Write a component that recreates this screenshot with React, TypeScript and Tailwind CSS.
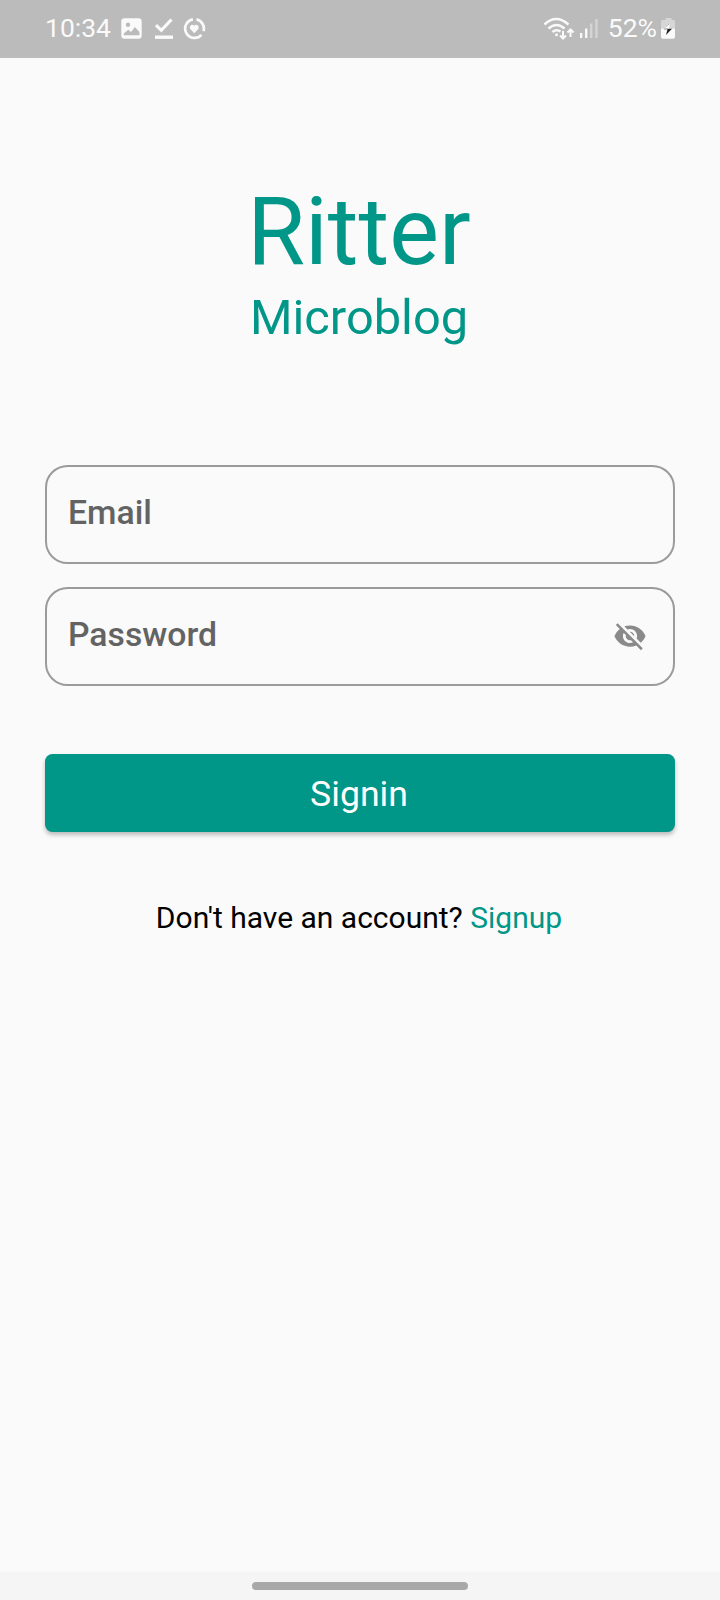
import React from "react";
import { MdVisibilityOff } from "react-icons/md";

function ImageIcon() {
  return (
    <svg className="ml-[10px] h-[22px] w-[22px]" viewBox="0 0 22 22" fill="#fafafa">
      <path fillRule="evenodd" d="M3.500 .2H17.500A3.200 3.200 0 0 1 20.700 3.400V17.600A3.200 3.200 0 0 1 17.500 20.800H3.500A3.200 3.200 0 0 1 .3 17.600V3.400A3.200 3.200 0 0 1 3.500 .2ZM2.800 17.300H18.400V14L14 9L10 14L7.200 11.800L2.800 15.500ZM7 4.600A2.200 2.200 0 1 0 7 9A2.200 2.200 0 1 0 7 4.600Z" />
    </svg>
  );
}

function DoneIcon() {
  return (
    <svg className="ml-[11px] h-[22px] w-[20px]" viewBox="0 0 20 22" fill="none" stroke="#fafafa">
      <path d="M2 7.200L7.300 12.300L17.500 1.500" strokeWidth="3.200" />
      <path d="M1 19.200H19" strokeWidth="3.400" />
    </svg>
  );
}

function HeartRingIcon() {
  return (
    <svg className="ml-[9px] h-[22px] w-[23px]" viewBox="0 0 23 22">
      <g fill="none" stroke="#fafafa" strokeWidth="2.700">
        <path d="M9.900 1.300A9.400 9.400 0 1 0 18.500 16.900" />
        <path d="M13.500 1.400A9.400 9.400 0 0 1 20.500 13.200" />
      </g>
      <path d="M11.300 15.300L7.500 11.300C5.300 8.500 9 5 11.300 7.800C13.600 5 17.300 8.500 15.100 11.300Z" fill="#fafafa" />
    </svg>
  );
}

function WifiIcon() {
  return (
    <svg className="h-[24px] w-[32px]" viewBox="0 0 32 24" fill="none" stroke="#fafafa" strokeWidth="2.500">
      <path d="M1.500 7.500Q13 -3.500 25.500 7.500M5.500 11.500Q13.500 4.500 21.500 11.500M9.500 15Q13.500 11.700 17.500 14.500" />
      <circle cx="13.500" cy="17.800" r="1.500" fill="#fafafa" stroke="none" />
      <path d="M20 14V21M17 18.500L20 21.500L23 18.500M27.500 20V13M24.500 15.500L27.500 12.500L30.500 15.500" strokeWidth="2" />
    </svg>
  );
}

function SignalIcon() {
  return (
    <svg className="ml-[4px] h-[22px] w-[20px]" viewBox="0 0 20 22" fill="#fafafa">
      <rect x="1" y="15" width="2.300" height="5" />
      <rect x="6" y="10.500" width="2.400" height="9.500" />
      <rect x="11" y="5.500" width="2.400" height="14.500" opacity=".4" />
      <rect x="16.200" y="1" width="2.400" height="19" opacity=".4" />
    </svg>
  );
}

function BatteryIcon() {
  return (
    <svg className="ml-[4px] h-[22px] w-[15px]" viewBox="0 0 15 22">
      <path d="M4.500 0H10.500V2H12.500Q14 2 14 3.500V11H0V3.500Q0 2 1.500 2H4.500Z" fill="#d6d6d6" />
      <path d="M0 10.700H14V18.800Q14 20.800 12 20.800H2Q0 20.800 0 18.800Z" fill="#fafafa" />
      <path d="M8.500 5.500L2.800 11.300H6.500L5 17L11 10.700H7.500Z" fill="#222" />
      <path d="M9 5.200L2.800 10.700H8Z" fill="#fafafa" />
    </svg>
  );
}

function Field({ label, children }: { label: string; children?: React.ReactNode }) {
  return (
    <div className="flex h-[99px] items-center justify-between rounded-[22.500px] border-2 border-[#9b9b9b] pr-[26px] pl-[21px]">
      <span className="pb-[4px] text-[33.750px] leading-[40px] font-medium text-[#636363]">{label}</span>
      {children}
    </div>
  );
}

export default function App() {
  return (
    <div className="flex h-[1600px] w-[720px] flex-col bg-[#fafafa] font-[Roboto,sans-serif]">
      <header className="flex h-[58px] items-center justify-between bg-[#bbbbbb] pr-[44px] pl-[45px] text-[26.500px] text-[#fafafa]">
        <div className="flex items-center">
          <span className="pb-[2px]">10:34</span>
          <ImageIcon />
          <DoneIcon />
          <HeartRingIcon />
        </div>
        <div className="flex items-center">
          <WifiIcon />
          <SignalIcon />
          <span className="ml-[9px] pb-[2px]">52%</span>
          <BatteryIcon />
        </div>
      </header>
      <main className="flex grow flex-col px-[45px] pt-[119px]">
        <div className="flex flex-col items-center text-[#009688]">
          <h1 className="pr-[2px] text-[93.750px] leading-[110px]">Ritter</h1>
          <p className="mt-[3px] pr-[2px] text-[48.750px] leading-[55px]">Microblog</p>
        </div>
        <div className="mt-[120px] flex flex-col gap-[23px]">
          <Field label="Email" />
          <Field label="Password">
            <MdVisibilityOff className="mb-[2px] h-[34px] w-[34px] text-[#8a8a8a]" />
          </Field>
        </div>
        <button className="mt-[67.500px] flex h-[78.750px] items-center justify-center rounded-[7.500px] bg-[#009688] pt-[4px] pr-[2px] text-[35.625px] text-white shadow-[0_3px_4px_rgba(0,0,0,0.25)]">
          Signin
        </button>
        <p className="mt-[68px] pr-[2px] text-center text-[30px] leading-[36px] text-black">
          Don't have an account? <a className="text-[#009688]">Signup</a>
        </p>
      </main>
      <footer className="flex h-[28px] items-center justify-center bg-[#f5f5f5]">
        <div className="h-[8px] w-[216px] rounded-full bg-[#a8a8a8]" />
      </footer>
    </div>
  );
}
